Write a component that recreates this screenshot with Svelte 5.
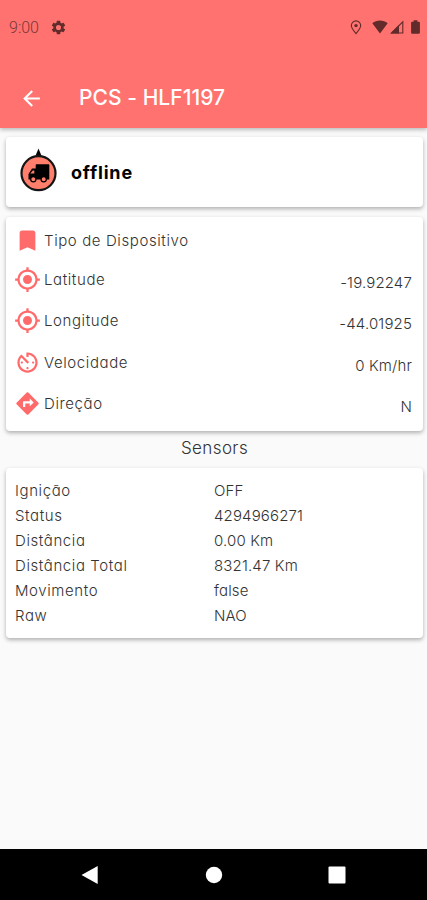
<script lang="ts">
  interface Detail {
    icon: string;
    label: string;
    value: string;
  }

  interface Sensor {
    name: string;
    value: string;
  }

  const icons: Record<string, string> = {
    bookmark: 'M17 3H7c-1.1 0-1.99.9-1.99 2L5 21l7-3 7 3V5c0-1.1-.9-2-2-2z',
    gps: 'M12 8c-2.21 0-4 1.79-4 4s1.79 4 4 4 4-1.79 4-4-1.79-4-4-4zm8.94 3A8.994 8.994 0 0 0 13 3.06V1h-2v2.06A8.994 8.994 0 0 0 3.06 11H1v2h2.06A8.994 8.994 0 0 0 11 20.94V23h2v-2.06A8.994 8.994 0 0 0 20.94 13H23v-2h-2.06zM12 19c-3.87 0-7-3.13-7-7s3.13-7 7-7 7 3.13 7 7-3.13 7-7 7z',
    timer: 'M11 17c0 .55.45 1 1 1s1-.45 1-1-.45-1-1-1-1 .45-1 1zm0-14v4h2V5.08c3.39.49 6 3.39 6 6.92 0 3.87-3.13 7-7 7s-7-3.13-7-7c0-1.68.59-3.22 1.58-4.42L12 13l1.41-1.41-6.8-6.8v.02C4.42 6.45 3 9.05 3 12c0 4.97 4.02 9 9 9 4.97 0 9-4.03 9-9s-4.03-9-9-9h-1zm7 9c0-.55-.45-1-1-1s-1 .45-1 1 .45 1 1 1 1-.45 1-1zM6 12c0 .55.45 1 1 1s1-.45 1-1-.45-1-1-1-1 .45-1 1z',
    directions: 'M21.71 11.29l-9-9a.996.996 0 0 0-1.41 0l-9 9a.996.996 0 0 0 0 1.41l9 9c.39.39 1.02.39 1.41 0l9-9a.996.996 0 0 0 0-1.41zM14 14.5V12h-4v3H8v-4c0-.55.45-1 1-1h5V7.5l3.5 3.5-3.5 3.5z'
  };

  const details: Detail[] = [
    { icon: 'bookmark', label: 'Tipo de Dispositivo', value: '' },
    { icon: 'gps', label: 'Latitude', value: '-19.92247' },
    { icon: 'gps', label: 'Longitude', value: '-44.01925' },
    { icon: 'timer', label: 'Velocidade', value: '0 Km/hr' },
    { icon: 'directions', label: 'Direção', value: 'N' }
  ];

  const sensors: Sensor[] = [
    { name: 'Ignição', value: 'OFF' },
    { name: 'Status', value: '4294966271' },
    { name: 'Distância', value: '0.00 Km' },
    { name: 'Distância Total', value: '8321.47 Km' },
    { name: 'Movimento', value: 'false' },
    { name: 'Raw', value: 'NAO' }
  ];
</script>

<div class="screen">
  <header>
    <div class="status-bar">
      <span class="clock">9:00</span>
      <svg class="gear" viewBox="0 0 24 24">
        <path fill-rule="evenodd" d="M19.14 12.94c.04-.3.06-.61.06-.94 0-.32-.02-.64-.07-.94l2.03-1.58a.49.49 0 0 0 .12-.61l-1.92-3.32a.488.488 0 0 0-.59-.22l-2.39.96c-.5-.38-1.03-.7-1.62-.94l-.36-2.54a.484.484 0 0 0-.48-.41h-3.84c-.24 0-.43.17-.47.41l-.36 2.54c-.59.24-1.13.57-1.62.94l-2.39-.96c-.22-.08-.47 0-.59.22L2.74 8.87c-.12.21-.08.47.12.61l2.03 1.58c-.05.3-.09.63-.09.94s.02.64.07.94l-2.03 1.58a.49.49 0 0 0-.12.61l1.92 3.32c.12.22.37.29.59.22l2.39-.96c.5.38 1.03.7 1.62.94l.36 2.54c.05.24.24.41.48.41h3.84c.24 0 .44-.17.47-.41l.36-2.54c.59-.24 1.13-.56 1.62-.94l2.39.96c.22.08.47 0 .59-.22l1.92-3.32c.12-.22.07-.47-.12-.61l-2.01-1.58zM12 15.6a3.6 3.6 0 1 1 0-7.2 3.6 3.6 0 0 1 0 7.2z" />
      </svg>
      <div class="indicators">
        <svg width="12" height="15" viewBox="0 0 12 15">
          <path class="outline" d="M6 13.6C3.600 10.600 1.300 8.200 1.300 5.600a4.700 4.700 0 0 1 9.400 0c0 2.600-2.300 5-4.700 8z" />
          <circle cx="6" cy="5.600" r="1.700" />
        </svg>
        <svg class="wifi" width="16" height="14" viewBox="0 0 16 14">
          <path d="M8 13.500L0.300 3.200C4.500-.4 11.500-.4 15.700 3.200z" />
        </svg>
        <svg class="signal" width="14" height="14" viewBox="0 0 14 14">
          <path d="M0.500 13.500L9 5V13.500z" />
          <path class="outline" d="M1.500 13L12.800 1.800V13z" />
        </svg>
        <svg class="battery" width="9" height="14" viewBox="0 0 9 14">
          <path d="M2.600 0.300h3.800v1.400h1.500q1 0 1 1v10q0 1-1 1H1.100q-1 0-1-1v-10q0-1 1-1h1.500z" />
        </svg>
      </div>
    </div>
    <div class="app-bar">
      <svg class="back" viewBox="0 0 24 24">
        <path d="M20 11H7.830l5.590-5.590L12 4l-8 8 8 8 1.410-1.410L7.830 13H20v-2z" />
      </svg>
      <h1>PCS - HLF1197</h1>
    </div>
  </header>

  <main>
    <section class="card state">
      <svg width="38" height="46" viewBox="0 0 38 46">
        <path d="M18.500 0.500L22 9H15z" />
        <circle cx="18.500" cy="25.200" r="17" fill="#ff7f6c" stroke="#151515" stroke-width="2.200" />
        <path d="M15.700 17q0-.7.7-.7h12.200q.7 0 .7.700v14.500H15.700zM12 20.500h3.800v11H8.500V26z" />
        <path d="M10.200 25.600l2.600-3.200h1.500v3.200z" fill="#ff7f6c" />
        <circle cx="13.300" cy="31.300" r="2.600" fill="#ff7f6c" stroke="#000" stroke-width="1.200" />
        <circle cx="23.700" cy="31.300" r="2.600" fill="#ff7f6c" stroke="#000" stroke-width="1.200" />
      </svg>
      <strong>offline</strong>
    </section>

    <section class="card details">
      {#each details as detail}
        <div class="detail">
          <svg viewBox="0 0 24 24"><path d={icons[detail.icon]} /></svg>
          <span class="label">{detail.label}</span>
          <span class="value">{detail.value}</span>
        </div>
      {/each}
    </section>

    <h2>Sensors</h2>

    <section class="card sensors">
      {#each sensors as sensor}
        <div class="sensor">
          <span class="label">{sensor.name}</span>
          <span>{sensor.value}</span>
        </div>
      {/each}
    </section>
  </main>

  <nav>
    <svg viewBox="0 0 20 20"><path d="M1.500 10L17.700 1v18z" /></svg>
    <svg viewBox="0 0 20 20"><circle cx="10" cy="10" r="8.200" /></svg>
    <svg viewBox="0 0 20 20"><rect x="1.500" y="1.500" width="17" height="17" rx="1" /></svg>
  </nav>
</div>

<style>
  :global(body) {
    margin: 0;
  }

  .screen {
    display: flex;
    flex-direction: column;
    height: 900px;
    background: #fafafa;
    font-family: 'Inter', sans-serif;
    font-feature-settings: 'cv11';
    font-weight: 300;
    font-size: 15px;
    letter-spacing: 0.15px;
    color: #333;
  }

  header {
    height: 128px;
    background: #ff726f;
    box-shadow: 0 2px 4px rgba(0, 0, 0, 0.25);
  }

  .status-bar {
    display: flex;
    align-items: center;
    height: 54px;
    padding: 0 7px 0 9px;
    fill: #602b2a;
  }

  .clock {
    width: 41px;
    font-family: Roboto, sans-serif;
    font-size: 16px;
    letter-spacing: 0;
    color: #7a3735;
  }

  .gear {
    width: 17px;
    height: 17px;
  }

  .indicators {
    display: flex;
    align-items: center;
    margin-left: auto;
  }

  .outline {
    fill: none;
    stroke: #602b2a;
    stroke-width: 1.1;
  }

  .wifi {
    margin-left: 10px;
  }

  .signal {
    margin-left: 2px;
  }

  .battery {
    margin-left: 7px;
  }

  .app-bar {
    display: flex;
    align-items: center;
    height: 86px;
    padding-left: 19px;
    color: #fff;
  }

  .back {
    width: 25px;
    height: 25px;
    margin-right: 35px;
    margin-top: 3px;
    fill: #fff;
  }

  h1 {
    margin: 0;
    font-size: 21px;
    font-weight: 500;
    letter-spacing: 0.05px;
  }

  main {
    flex: 1;
    padding: 9px 4px 0 6px;
  }

  .card {
    box-sizing: border-box;
    background: #fff;
    border-radius: 4px;
    box-shadow: 0 2px 4px rgba(0, 0, 0, 0.3);
  }

  .state {
    display: flex;
    align-items: center;
    gap: 13px;
    height: 70px;
    padding-left: 14px;
    color: #000;
  }

  .state svg {
    margin-bottom: 2px;
  }

  .state strong {
    font-size: 18px;
    font-weight: 700;
    letter-spacing: 0.8px;
  }

  .details {
    height: 214px;
    margin-top: 10px;
    padding: 10px 11px 0 8px;
  }

  .detail {
    display: flex;
    align-items: center;
    height: 41.3px;
  }

  .detail:first-child {
    height: 27px;
    margin-bottom: 5px;
  }

  .detail svg {
    width: 27px;
    height: 27px;
    margin-right: 3px;
    fill: #ff6b6b;
  }

  .label {
    letter-spacing: 0.6px;
  }

  .value {
    margin: 6px 0 0 auto;
  }

  h2 {
    margin: 0;
    height: 37px;
    line-height: 35px;
    text-align: center;
    font-size: 17px;
    font-weight: 300;
    letter-spacing: 0.4px;
  }

  .sensors {
    height: 170px;
    padding: 10px 9px;
  }

  .sensor {
    display: grid;
    grid-template-columns: 199px 1fr;
    line-height: 25px;
  }

  nav {
    display: flex;
    justify-content: space-between;
    align-items: center;
    box-sizing: border-box;
    height: 51px;
    padding: 0 80px;
    background: #000;
    fill: #fff;
  }

  nav svg {
    width: 20px;
    height: 20px;
  }
</style>
